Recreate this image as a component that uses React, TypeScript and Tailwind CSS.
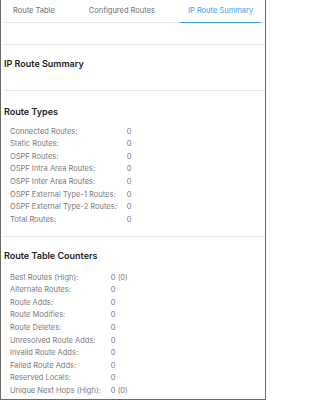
import React from "react"

const routeTypes: [string, string][] = [
    ["Connected Routes:", "0"],
    ["Static Routes:", "0"],
    ["OSPF Routes:", "0"],
    ["OSPF Intra Area Routes:", "0"],
    ["OSPF Inter Area Routes:", "0"],
    ["OSPF External Type-1 Routes:", "0"],
    ["OSPF External Type-2 Routes:", "0"],
    ["Total Routes:", "0"],
]

const counters: [string, string][] = [
    ["Best Routes (High):", "0 (0)"],
    ["Alternate Routes:", "0"],
    ["Route Adds:", "0"],
    ["Route Modifies:", "0"],
    ["Route Deletes:", "0"],
    ["Unresolved Route Adds:", "0"],
    ["Invalid Route Adds:", "0"],
    ["Failed Route Adds:", "0"],
    ["Reserved Locals:", "0"],
    ["Unique Next Hops (High):", "0 (0)"],
]

function KeyValues({ rows }: { rows: [string, string][] }) {
    return (
        <div className="grid grid-cols-[auto_1fr] auto-rows-[12.6px] items-center gap-x-[10px] pl-[6px] text-[7.5px] text-[#7a7a7a]">
            {rows.map(([k, v]) => (
                <React.Fragment key={k}>
                    <span className="whitespace-nowrap">{k}</span>
                    <span className="whitespace-nowrap">{v}</span>
                </React.Fragment>
            ))}
        </div>
    )
}

export default function App() {
    const tabs = ["Route Table", "Configured Routes", "IP Route Summary"]
    return (
        <div
            className="w-[266px] h-[400px] overflow-hidden bg-white border-l border-r border-b border-[#6b6b6b] pl-[3px]"
            style={{ fontFamily: "Inter, 'Noto Sans', sans-serif" }}
        >
            {/* tabs */}
            <div className="flex gap-[16px] h-[23px] border-b border-[#e6e6e6] text-[7.5px] text-[#6f6f6f]">
                {tabs.map((t, i) => (
                    <div
                        key={t}
                        className={
                            i === 2
                                ? "shrink-0 whitespace-nowrap flex items-center px-[8px] border-b-[1.5px] border-[#3d9bf0] text-[#3d9bf0] -mb-px"
                                : "shrink-0 whitespace-nowrap flex items-center px-[9px]"
                        }
                    >
                        {t}
                    </div>
                ))}
            </div>

            <div className="h-[22px] border-b border-[#e6e6e6]" />

            <div className="h-[46px] pt-[13px] border-b border-[#e6e6e6] text-[9px] leading-[12px] font-semibold text-[#222]">
                IP Route Summary
            </div>

            <div className="h-[146px] pt-[15px] border-b border-[#e6e6e6]">
                <div className="text-[9px] font-semibold text-[#222] leading-[12px] mb-[7px]">Route Types</div>
                <KeyValues rows={routeTypes} />
            </div>

            <div className="pt-[13px]">
                <div className="text-[9px] font-semibold text-[#222] leading-[12px] mb-[9px]">Route Table Counters</div>
                <KeyValues rows={counters} />
            </div>
        </div>
    )
}
